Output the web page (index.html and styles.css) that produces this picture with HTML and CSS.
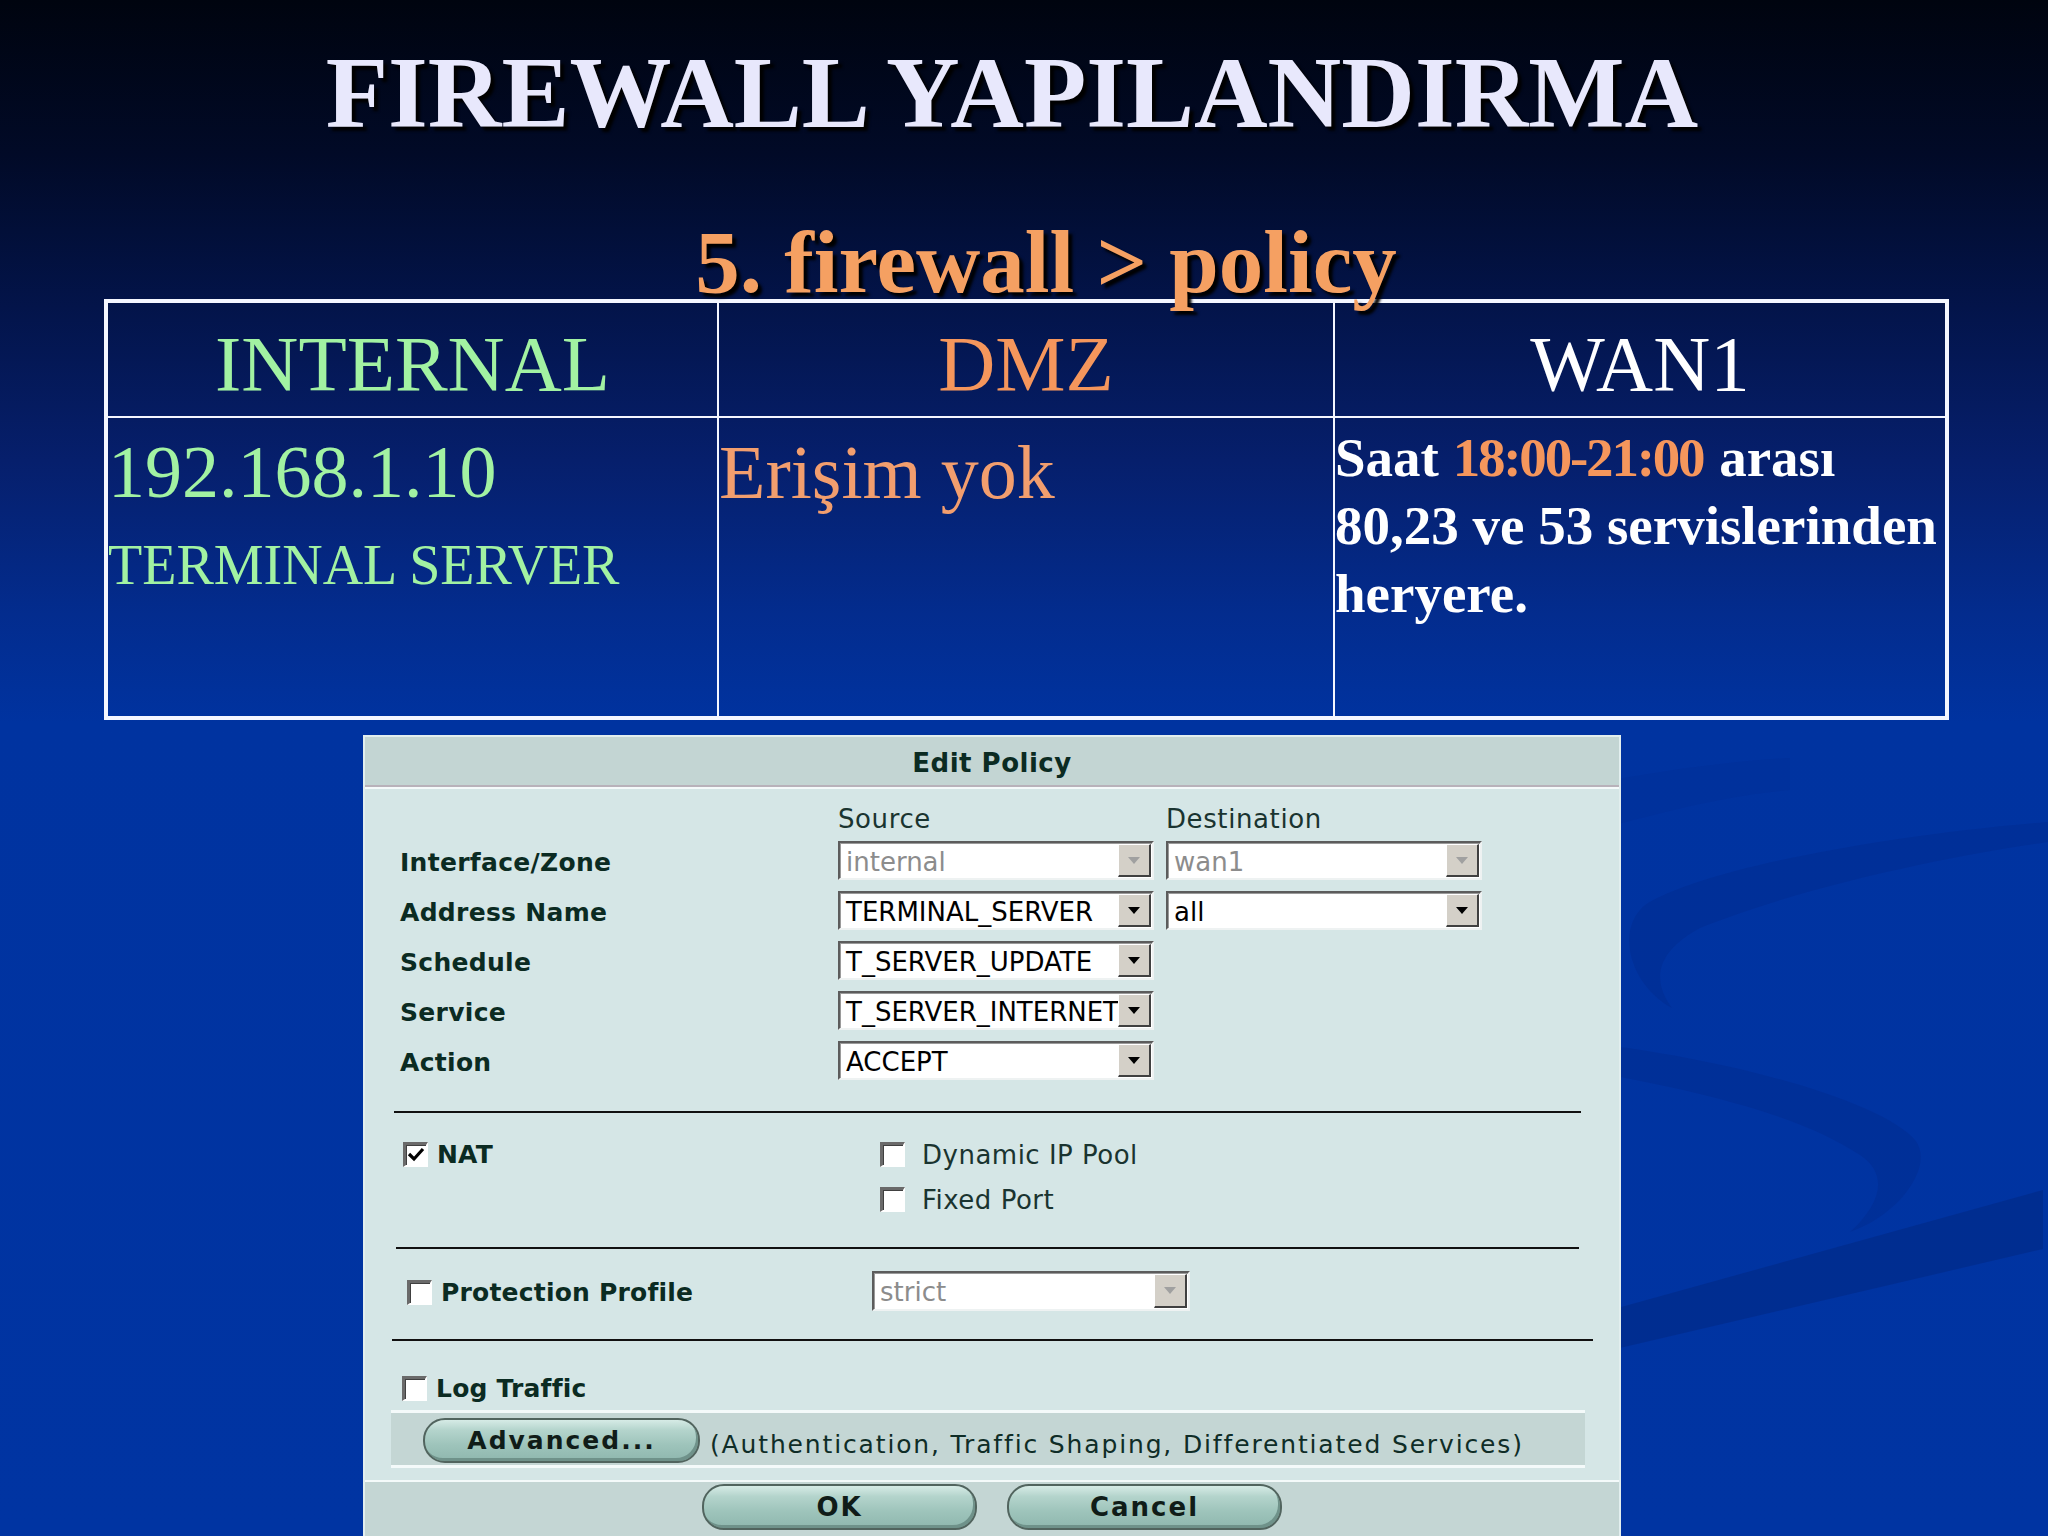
FILE: index.html
```html
<!DOCTYPE html>
<html lang="tr">
<head>
<meta charset="utf-8">
<title>Firewall Yapılandırma</title>
<link rel="stylesheet" href="styles.css">
</head>
<body>
<div class="slide">
  <svg class="swoosh" width="2048" height="1536" viewBox="0 0 2048 1536" aria-hidden="true">
    <path class="sw-faint" d="M1560 790 C1650 772 1720 762 1790 758 L1790 790 C1720 796 1650 815 1560 840 Z"/>
    <path class="sw-arc" d="M2048 822 C1880 835 1700 870 1645 905 C1615 930 1630 985 1672 1008 C1655 985 1650 955 1700 928 C1780 895 1920 860 2048 842 Z"/>
    <path class="sw-arc" d="M1560 1040 C1720 1055 1880 1100 1915 1140 C1935 1165 1900 1215 1850 1232 C1880 1205 1890 1175 1860 1155 C1800 1115 1700 1090 1560 1066 Z"/>
    <path class="sw-band" d="M1560 1324 L2043 1190 L2043 1249 L1560 1362 Z"/>
  </svg>
  <div class="content">
    <h1 class="title">FIREWALL YAPILANDIRMA</h1>
    <h2 class="subtitle">5. firewall &gt; policy</h2>

    <div class="ptable">
      <div class="cell head c1 green">INTERNAL</div>
      <div class="cell head c2 orange">DMZ</div>
      <div class="cell head c3 white">WAN1</div>
      <div class="cell body c1 green">
        <div class="big">192.168.1.10</div>
        <div class="mid">TERMINAL SERVER</div>
      </div>
      <div class="cell body c2">
        <div class="big erisim orange-soft">Erişim yok</div>
      </div>
      <div class="cell body c3">
        <p class="rule">Saat <span class="orange tight">18:00-21:00</span> arası<br>80,23 ve 53 servislerinden<br>heryere.</p>
      </div>
    </div>

    <div class="dlg">
      <div class="dlg-head">Edit Policy</div>
      <div class="dlg-body">
        <div class="colheads">
          <span></span><span class="colhead">Source</span><span class="colhead">Destination</span>
        </div>
        <div class="form">
          <span class="lbl">Interface/Zone</span>
          <div class="sel disabled"><span class="val">internal</span><span class="arr"><svg width="12" height="7" viewBox="0 0 12 7"><path d="M0 0 H12 L6 7 Z"/></svg></span></div>
          <div class="sel disabled"><span class="val">wan1</span><span class="arr"><svg width="12" height="7" viewBox="0 0 12 7"><path d="M0 0 H12 L6 7 Z"/></svg></span></div>

          <span class="lbl">Address Name</span>
          <div class="sel"><span class="val">TERMINAL_SERVER</span><span class="arr"><svg width="12" height="7" viewBox="0 0 12 7"><path d="M0 0 H12 L6 7 Z"/></svg></span></div>
          <div class="sel"><span class="val">all</span><span class="arr"><svg width="12" height="7" viewBox="0 0 12 7"><path d="M0 0 H12 L6 7 Z"/></svg></span></div>

          <span class="lbl">Schedule</span>
          <div class="sel"><span class="val">T_SERVER_UPDATE</span><span class="arr"><svg width="12" height="7" viewBox="0 0 12 7"><path d="M0 0 H12 L6 7 Z"/></svg></span></div>
          <span></span>

          <span class="lbl">Service</span>
          <div class="sel"><span class="val">T_SERVER_INTERNET</span><span class="arr"><svg width="12" height="7" viewBox="0 0 12 7"><path d="M0 0 H12 L6 7 Z"/></svg></span></div>
          <span></span>

          <span class="lbl">Action</span>
          <div class="sel"><span class="val">ACCEPT</span><span class="arr"><svg width="12" height="7" viewBox="0 0 12 7"><path d="M0 0 H12 L6 7 Z"/></svg></span></div>
          <span></span>
        </div>

        <div class="sep sep1"></div>

        <div class="nat">
          <div class="chk bold nat-main"><span class="box"><svg width="20" height="20" viewBox="0 0 20 20"><path d="M3 9 L8 14 L17 4" fill="none" stroke="#000" stroke-width="3.2"/></svg></span>NAT</div>
          <div class="natopts">
            <div class="chk wide-gap"><span class="box"></span>Dynamic IP Pool</div>
            <div class="chk wide-gap"><span class="box"></span>Fixed Port</div>
          </div>
        </div>

        <div class="sep sep2"></div>

        <div class="prot">
          <div class="chk bold prot-chk"><span class="box"></span>Protection Profile</div>
          <div class="sel disabled prot-sel"><span class="val">strict</span><span class="arr"><svg width="12" height="7" viewBox="0 0 12 7"><path d="M0 0 H12 L6 7 Z"/></svg></span></div>
        </div>

        <div class="sep sep3"></div>

        <div class="chk bold log"><span class="box"></span>Log Traffic</div>

        <div class="advbar">
          <span class="btn adv">Advanced...</span>
          <span class="advtxt">(Authentication, Traffic Shaping, Differentiated Services)</span>
        </div>
      </div>
      <div class="dlg-foot">
        <span class="btn ok">OK</span>
        <span class="btn cancel">Cancel</span>
      </div>
    </div>
  </div>
</div>
</body>
</html>
```

FILE: styles.css
```css
* { box-sizing: border-box; }
html, body { margin: 0; padding: 0; }
body { width: 2048px; height: 1536px; overflow: hidden; background: #0033a0; }

.slide {
  position: relative;
  width: 2048px;
  height: 1536px;
  overflow: hidden;
  background: linear-gradient(180deg, #00040f 0%, #010a27 10%, #03144a 20%, #061f6c 30%, #032c8e 40%, #0033a0 47%, #0034a2 100%);
}
.swoosh { position: absolute; left: 0; top: 0; }
.sw-arc { fill: #002c90; opacity: 0.5; }
.sw-band { fill: #002a86; opacity: 0.6; }
.sw-faint { fill: #002c90; opacity: 0.25; }

.content { position: relative; }

.title {
  margin: 0;
  padding: 42px 24px 0 0;
  font: bold 102px/102px "Liberation Serif", "Times New Roman", serif;
  color: #e8e8fc;
  text-align: center;
  white-space: nowrap;
  text-shadow: 4px 4px 3px #000;
}
.subtitle {
  position: relative;
  z-index: 2;
  margin: 74px 0 0;
  padding-left: 44px;
  font: bold 89px/89px "Liberation Serif", "Times New Roman", serif;
  color: #f5a062;
  text-align: center;
  white-space: nowrap;
  text-shadow: 4px 4px 3px #000;
}

/* policy table */
.ptable {
  display: grid;
  grid-template-columns: 609px 616px 612px;
  width: 1845px;
  margin: -8px 0 0 104px;
  border: 4px solid #f4f6ff;
  font-family: "Liberation Serif", "Times New Roman", serif;
}
.cell { min-width: 0; }
.c2, .c3 { border-left: 2px solid #f4f6ff; }
.head {
  height: 115px;
  padding-top: 22px;
  border-bottom: 2px solid #f4f6ff;
  font-size: 79px;
  line-height: 78px;
  text-align: center;
}
.body { height: 298px; }
.green { color: #a2f2a2; }
.orange { color: #f5965c; }
.orange-soft { color: #f29e6e; }
.white { color: #ffffff; }
.big { margin-top: 17px; font-size: 74px; line-height: 74px; white-space: nowrap; }
.erisim { font-size: 76px; }
.mid { margin-top: 28px; font-size: 56px; line-height: 56px; white-space: nowrap; }
.rule {
  margin: 0;
  padding-top: 6px;
  font-size: 55px;
  line-height: 68px;
  font-weight: bold;
  color: #fff;
  white-space: nowrap;
}
.tight { letter-spacing: -2.2px; margin-right: 2px; }

/* dialog */
.dlg {
  width: 1258px;
  margin: 15px 0 0 363px;
  border: 2px solid #e2eeee;
  border-bottom: none;
  background: #d5e6e6;
  font-family: "DejaVu Sans", Verdana, sans-serif;
  color: #0b2b22;
}
.dlg-head {
  height: 50px;
  line-height: 52px;
  background: #c3d5d3;
  border-bottom: 2px solid #b8b2ba;
  text-align: center;
  font-weight: bold;
  font-size: 26px;
  letter-spacing: 0.5px;
}
.dlg-body {
  border-top: 2px solid #f4fafa;
  padding: 15px 0 12px;
}
.colheads, .form {
  display: grid;
  grid-template-columns: 426px 316px 316px;
  column-gap: 12px;
  padding-left: 35px;
}
.colheads { height: 30px; line-height: 30px; margin-bottom: 7px; font-size: 26px; letter-spacing: 0.6px; color: #1a3430; }
.form { row-gap: 11px; align-items: center; }
.lbl { font-weight: bold; font-size: 25px; letter-spacing: 0.3px; white-space: nowrap; padding-top: 3px; }

.sel {
  display: flex;
  height: 39px;
  border-style: solid;
  border-width: 2px;
  border-color: #5c5c5c #eef2f2 #eef2f2 #5c5c5c;
  box-shadow: inset 1px 1px 0 #9a9a9a;
  background: #fff;
  font-size: 26px;
  color: #000;
  overflow: hidden;
}
.sel .val {
  flex: 1;
  min-width: 0;
  padding: 3px 0 0 6px;
  line-height: 33px;
  white-space: nowrap;
  overflow: hidden;
}
.sel .arr {
  flex: none;
  width: 33px;
  margin: 1px 1px 1px 0;
  display: flex;
  align-items: center;
  justify-content: center;
  background: #d4d0c8;
  border-style: solid;
  border-width: 1px 2px 2px 1px;
  border-color: #ffffff #404040 #404040 #ffffff;
}
.sel .arr svg path { fill: #000; }
.sel.disabled .val { color: #8c8c8c; }
.sel.disabled .arr svg path { fill: #a0a0a0; }

.sep { height: 2px; background: #111; }
.sep1 { margin: 31px 38px 0 29px; }
.sep2 { margin: 35px 40px 0 31px; }
.sep3 { margin: 28px 26px 0 27px; }

.chk {
  display: flex;
  align-items: center;
  gap: 9px;
  height: 25px;
  font-size: 25px;
  letter-spacing: 0.2px;
  white-space: nowrap;
}
.chk.bold { font-weight: bold; }
.chk.wide-gap { gap: 17px; font-size: 26px; letter-spacing: 0.5px; color: #1a3430; font-weight: normal; }
.box {
  flex: none;
  width: 25px;
  height: 25px;
  display: flex;
  align-items: center;
  justify-content: center;
  background: #fff;
  border-style: solid;
  border-width: 3px 2px 2px 3px;
  border-color: #6a6a6a #ffffff #ffffff #6a6a6a;
  box-shadow: inset 1px 1px 0 #404040;
}

.nat {
  display: flex;
  padding-top: 29px;
}
.nat-main { margin-left: 38px; width: 477px; }
.natopts { display: flex; flex-direction: column; gap: 20px; }

.prot {
  display: flex;
  align-items: center;
  margin-top: 22px;
  height: 40px;
}
.prot-chk { margin-left: 42px; width: 465px; padding-top: 3px; }
.prot-sel { width: 318px; height: 40px; }

.log { margin: 35px 0 0 37px; }

.advbar {
  display: flex;
  align-items: center;
  height: 58px;
  margin: 9px 34px 0 26px;
  padding-left: 32px;
  background: #c4d6d4;
  border-top: 3px solid #f4fafa;
  border-bottom: 3px solid #f4fafa;
}
.advtxt {
  margin-left: 10px;
  padding-top: 10px;
  font-size: 25px;
  letter-spacing: 1.85px;
  white-space: nowrap;
  color: #0f2d27;
}

.btn {
  display: inline-flex;
  align-items: center;
  justify-content: center;
  height: 45px;
  border-radius: 22px;
  border: 2px solid #51645e;
  background: linear-gradient(180deg, #d6ebe6 0%, #b4d4cc 25%, #9ec4bb 60%, #8fb7ae 100%);
  box-shadow: inset -2px -3px 0 #6f928a;
  font-weight: bold;
  font-size: 26px;
  letter-spacing: 2px;
  color: #101c18;
  white-space: nowrap;
}
.adv { width: 277px; font-size: 25px; margin-top: 2px; }

.dlg-foot {
  display: flex;
  justify-content: center;
  gap: 30px;
  height: 60px;
  padding-top: 2px;
  background: #c4d6d4;
  border-top: 2px solid #f4fafa;
}
.ok, .cancel { width: 275px; height: 46px; }
```
